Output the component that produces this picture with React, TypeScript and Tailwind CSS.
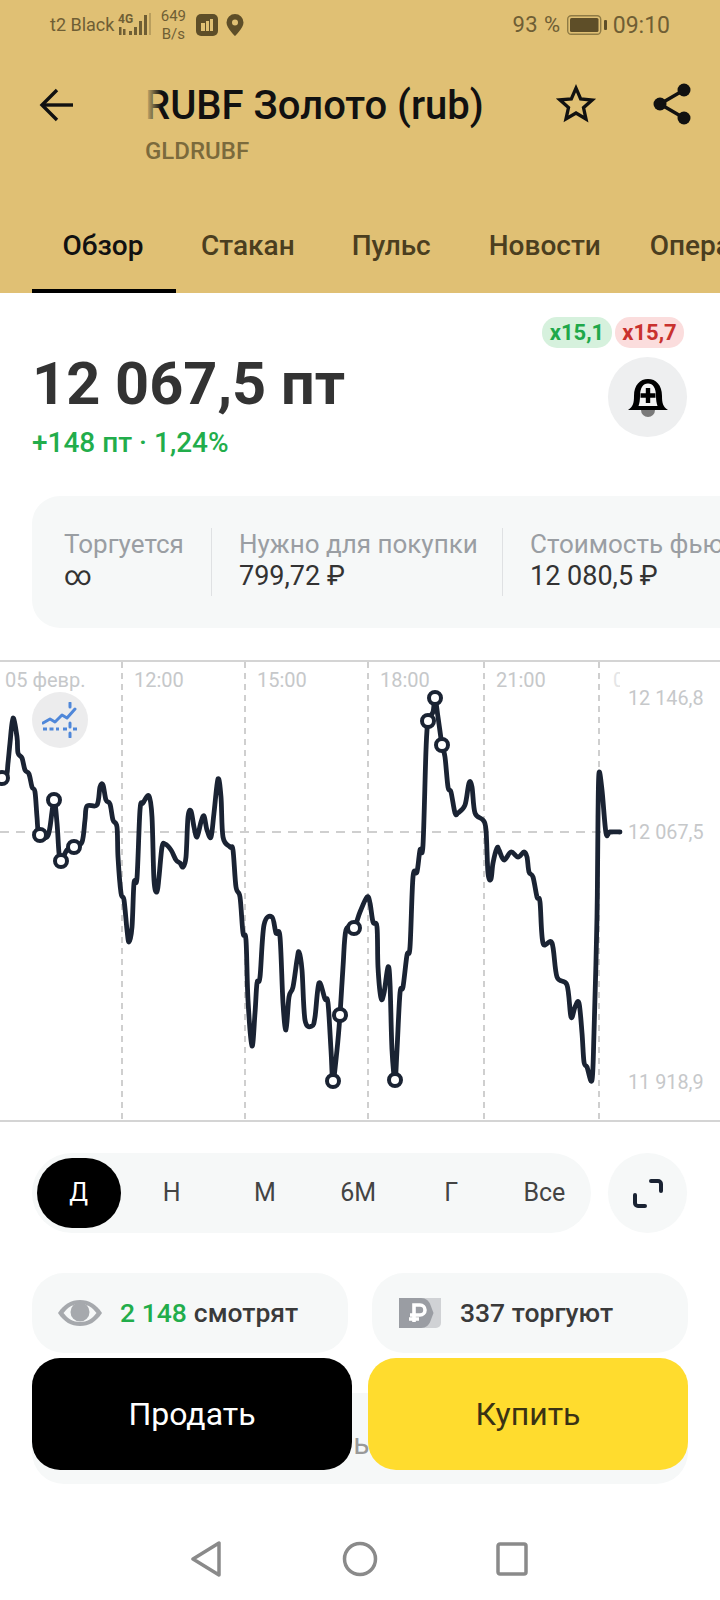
const chartPoints: [number, number][] = [
  [-2, 778], [6, 777], [8, 763], [10, 743], [13, 718], [17, 737], [18, 753], [22, 758], [25, 770], [29, 774],
  [32, 787], [35, 792], [37, 817], [39, 835], [47, 837], [50, 827], [54, 800], [57, 823], [59, 853], [61, 861],
  [67, 850], [74, 847], [82, 842], [85, 820], [87, 806], [97, 805], [100, 787], [103, 785], [106, 800], [110, 804],
  [113, 820], [117, 827], [118, 857], [121, 893], [124, 900], [127, 930], [129, 942], [132, 927], [134, 883], [137, 878],
  [140, 810], [143, 803], [149, 796], [152, 817], [154, 880], [157, 892], [159, 877], [162, 847], [165, 844], [171, 850],
  [176, 860], [180, 863], [183, 867], [186, 857], [188, 817], [191, 811], [194, 827], [197, 837], [201, 822], [204, 816],
  [207, 830], [211, 837], [214, 813], [218, 779], [221, 797], [223, 837], [230, 847], [233, 850], [236, 887], [240, 897],
  [243, 933], [246, 940], [248, 1000], [252, 1046], [255, 1013], [257, 983], [260, 977], [264, 925], [272, 917], [276, 933],
  [280, 937], [283, 1003], [286, 1030], [289, 997], [293, 987], [297, 960], [299, 952], [302, 970], [305, 1020], [312, 1026],
  [315, 1017], [319, 983], [325, 999], [328, 1003], [331, 1050], [333, 1081], [337, 1050], [340, 1015], [343, 967], [346, 930],
  [354, 928], [360, 912], [367, 897], [370, 903], [373, 922], [377, 927], [378, 967], [381, 998], [384, 993], [388, 967],
  [390, 983], [392, 1050], [395, 1080], [397, 1050], [400, 993], [403, 987], [407, 955], [410, 947], [413, 877], [417, 872],
  [420, 850], [423, 845], [426, 750], [428, 721], [433, 712], [435, 698], [438, 717], [442, 745], [445, 757], [448, 787],
  [451, 792], [455, 813], [458, 813], [465, 805], [469, 783], [472, 787], [475, 813], [483, 820], [486, 830], [488, 873],
  [491, 879], [493, 863], [497, 848], [499, 850], [504, 860], [511, 852], [518, 857], [524, 852], [527, 857], [529, 872],
  [533, 877], [537, 897], [540, 902], [543, 943], [552, 943], [557, 977], [567, 985], [571, 1017], [575, 1007], [579, 1003],
  [582, 1033], [584, 1062], [587, 1067], [592, 1080], [594, 1033], [597, 917], [598, 817], [599, 773], [602, 790], [606, 833],
  [610, 832], [620, 832],
];

const markers: [number, number][] = [
  [2, 778], [40, 835], [54, 800], [61, 861], [74, 847], [333, 1081], [340, 1015], [354, 928],
  [395, 1080], [428, 721], [435, 698], [442, 745],
];

// page y of the top of the chart block
const chartTop = 660;

function smoothPath(points: [number, number][]) {
  let d = `M${points[0][0]} ${points[0][1] - chartTop}`;
  for (let i = 0; i < points.length - 1; i++) {
    const p0 = points[Math.max(i - 1, 0)];
    const p1 = points[i];
    const p2 = points[i + 1];
    const p3 = points[Math.min(i + 2, points.length - 1)];
    const c1x = p1[0] + (p2[0] - p0[0]) / 6;
    const c1y = p1[1] + (p2[1] - p0[1]) / 6;
    const c2x = p2[0] - (p3[0] - p1[0]) / 6;
    const c2y = p2[1] - (p3[1] - p1[1]) / 6;
    d += ` C${c1x} ${c1y - chartTop} ${c2x} ${c2y - chartTop} ${p2[0]} ${p2[1] - chartTop}`;
  }
  return d;
}

function StatusBar() {
  return (
    <div className="flex h-[50px] items-center justify-between pl-[50px] pr-[50px] text-[#6f5e34]">
      <div className="flex items-center">
        <span className="text-[18px] leading-none">t2 Black</span>
        <svg width="36" height="28" viewBox="0 0 36 28" className="ml-[3px]" fill="currentColor">
          <text x="1" y="12" fontSize="12" fontWeight="700" fontFamily="Roboto">4G</text>
          <rect x="2" y="16" width="2.500" height="8" />
          <rect x="6" y="18" width="2.500" height="6" />
          <rect x="12" y="20" width="3" height="4" />
          <rect x="17" y="16" width="3" height="8" />
          <rect x="22" y="10" width="3" height="14" />
          <rect x="27" y="4" width="3" height="20" />
          <rect x="32" y="2" width="2" height="22" opacity="0.35" />
        </svg>
        <div className="ml-[7px] flex w-[26px] flex-col items-center text-[15px] leading-[18px]">
          <span>649</span>
          <span>B/s</span>
        </div>
        <svg width="22" height="22" viewBox="0 0 22 22" className="ml-[10px]">
          <rect width="22" height="22" rx="5" fill="#5e4e28" />
          <path d="M5 9h4v8H5zM10 7h3v10h-3zM14 5h3v12h-3z" fill="#e0c074" />
        </svg>
        <svg width="18" height="22" viewBox="0 0 18 22" className="ml-[8px]">
          <path d="M9 0a8.500 8.500 0 0 0-8.500 8.500C.5 14 9 22 9 22s8.500-8 8.500-13.500A8.500 8.500 0 0 0 9 0z" fill="#5e4e28" />
          <circle cx="9" cy="8.500" r="3" fill="#e0c074" />
        </svg>
      </div>
      <div className="flex items-center">
        <span className="text-[22px] leading-none tracking-[0.5px]">93 %</span>
        <svg width="42" height="20" viewBox="0 0 42 20" className="ml-[6px]">
          <rect x="0.700" y="0.700" width="33" height="18.500" rx="3.500" fill="none" stroke="#8f7b45" strokeWidth="1.400" />
          <rect x="3" y="3" width="28.500" height="14" rx="1.500" fill="#5e4e28" />
          <rect x="37" y="5" width="3" height="10" rx="1" fill="#5e4e28" />
        </svg>
        <span className="ml-[4px] text-[23px] leading-none">09:10</span>
      </div>
    </div>
  );
}

function Header() {
  return (
    <div className="flex h-[293px] w-full shrink-0 flex-col bg-[#e0c074]">
      <StatusBar />
      <div className="flex items-start pt-[29px]">
        <svg width="38" height="34" viewBox="0 0 38 34" className="ml-[38px] mt-[9px]" fill="none" stroke="#111" strokeWidth="3.400">
          <path d="M35 17H4" />
          <path d="M19 2 4 17l15 15" />
        </svg>
        <div className="relative ml-[69px] w-[370px]">
          <div className="text-[40px] font-medium leading-[54px] text-[#111]">RUBF Золото (rub)</div>
          <div className="absolute left-0 top-0 h-[54px] w-[16px] bg-gradient-to-r from-[#e0c074] to-transparent" />
          <div className="mt-[5px] text-[24px] font-medium leading-[26px] text-[#7b6a3c]">GLDRUBF</div>
        </div>
        <svg width="42" height="40" viewBox="0 0 24 24" className="ml-[40px] mt-[5px]" fill="none" stroke="#111" strokeWidth="2" strokeLinejoin="miter">
          <path d="m12 2.500 2.800 6.400 6.900.7-5.200 4.600 1.500 6.800L12 17.400 6 20.900l1.500-6.800L2.300 9.500l6.900-.6z" />
        </svg>
        <svg width="38" height="42" viewBox="0 0 38 42" className="ml-[56px] mt-[4px]" fill="#111">
          <circle cx="31" cy="7" r="6.500" />
          <circle cx="7" cy="21" r="6.500" />
          <circle cx="31" cy="35" r="6.500" />
          <path d="M7 21 31 7M7 21l24 14" stroke="#111" strokeWidth="3.500" />
        </svg>
      </div>
      <div className="mt-auto flex h-[66px] items-stretch overflow-hidden whitespace-nowrap pl-[32px] text-[28px] font-medium">
        <div className="flex w-[144px] shrink-0 items-center justify-center border-b-[4px] border-black pb-[24px] pr-[2px] text-[#111]">Обзор</div>
        <div className="ml-[25px] flex shrink-0 items-center pb-[28px] text-[#4b3e1f]">Стакан</div>
        <div className="ml-[57px] flex shrink-0 items-center pb-[28px] text-[#4b3e1f]">Пульс</div>
        <div className="ml-[58px] flex shrink-0 items-center pb-[28px] text-[#4b3e1f]">Новости</div>
        <div className="ml-[49px] flex shrink-0 items-center pb-[28px] text-[#4b3e1f]">Операции</div>
      </div>
    </div>
  );
}

function PriceBlock() {
  return (
    <div className="flex h-[203px] shrink-0 justify-between pl-[32px] pr-[33px]">
      <div className="pt-[57px]">
        <div className="text-[59.5px] font-bold leading-[68px] text-[#333]">12 067,5 пт</div>
        <div className="mt-[9px] text-[28px] font-medium leading-[32px] text-[#22ad4b]">+148 пт · 1,24%</div>
      </div>
      <div className="flex flex-col items-end pt-[24px]">
        <div className="mr-[3px] flex gap-[3px] text-[22px] font-bold leading-none">
          <span className="flex h-[31px] w-[70px] items-center justify-center rounded-[15px] bg-[#d6f1dd] text-[#1fa84a]">x15,1</span>
          <span className="flex h-[31px] w-[69px] items-center justify-center rounded-[15px] bg-[#fbdddd] text-[#c9312e]">x15,7</span>
        </div>
        <div className="mt-[9px] flex h-[80px] w-[79px] items-center justify-center rounded-full bg-[#eeeff0]">
          <svg width="40" height="40" viewBox="0 0 40 40">
            <path d="M13 33a7 7 0 0 0 14 0z" fill="#7a7a7a" />
            <path d="M0 33c5-3 6-7 6-14C6 8 12 2 20 2s14 6 14 17c0 7 1 11 6 14z" fill="#000" />
            <path d="M10.500 29c1-3 1.500-6 1.500-10 0-8 3-12.500 8-12.500S28 11 28 19c0 4 .5 7 1.500 10z" fill="#f4f4f4" />
            <path d="M17.800 11h4.400v5.300h5.300v4.400h-5.300V26h-4.400v-5.300h-5.300v-4.400h5.300z" fill="#000" />
          </svg>
        </div>
      </div>
    </div>
  );
}

function InfoCard() {
  return (
    <div className="ml-[32px] flex h-[132px] shrink-0 items-center overflow-hidden whitespace-nowrap rounded-l-[28px] bg-[#f6f8f8] text-[26px]">
      <div className="flex h-[68px] w-[180px] shrink-0 flex-col border-r border-[#dfe1e3] pl-[32px]">
        <span className="leading-[32px] text-[#9a9ea3]">Торгуется</span>
        <span className="text-[27px] leading-[33px] text-[#333]">∞</span>
      </div>
      <div className="flex h-[68px] w-[291px] shrink-0 flex-col border-r border-[#dfe1e3] pl-[27px]">
        <span className="leading-[32px] text-[#9a9ea3]">Нужно для покупки</span>
        <span className="text-[27px] leading-[33px] text-[#333]">799,72 ₽</span>
      </div>
      <div className="flex h-[68px] shrink-0 flex-col pl-[27px]">
        <span className="leading-[32px] text-[#9a9ea3]">Стоимость фьючерса</span>
        <span className="text-[27px] leading-[33px] text-[#333]">12 080,5 ₽</span>
      </div>
    </div>
  );
}

function Chart() {
  const labels: [string, number][] = [
    ["05 февр.", 5],
    ["12:00", 134],
    ["15:00", 257],
    ["18:00", 380],
    ["21:00", 496],
  ];
  const prices: [string, number][] = [
    ["12 146,8", 698],
    ["12 067,5", 832],
    ["11 918,9", 1082],
  ];
  return (
    <div className="relative mt-[32px] h-[462px] shrink-0 border-y-2 border-[#d4d4d4]">
      <svg width="720" height="458" viewBox="0 0 720 458" fontFamily="Roboto" fontSize="20" className="block">
        {[122, 245, 368, 484, 599].map((x) => (
          <line key={x} x1={x} y1="0" x2={x} y2="458" stroke="#cfcfcf" strokeWidth="2" strokeDasharray="6 5" />
        ))}
        <line x1="0" y1="170" x2="620" y2="170" stroke="#cfcfcf" strokeWidth="2" strokeDasharray="9 7" />
        {labels.map(([t, x]) => (
          <text key={t} x={x} y="25" fill="#c6c8ca">{t}</text>
        ))}
        <svg x="613" y="0" width="7" height="40">
          <text x="0" y="25" fill="#e4e5e6">06</text>
        </svg>
        {prices.map(([t, y]) => (
          <text key={t} x="628" y={y - chartTop + 5} fill="#c6c8ca" fontSize="19.800">{t}</text>
        ))}
        <path d={smoothPath(chartPoints)} transform="translate(0 -2)" fill="none" stroke="#1a2333" strokeWidth="4.800" strokeLinejoin="round" strokeLinecap="round" />
        {markers.map(([x, y]) => (
          <circle key={x} cx={x} cy={y - chartTop - 2} r="6" fill="#fff" stroke="#1a2333" strokeWidth="4" />
        ))}
      </svg>
      <div className="absolute left-[32px] top-[30px] flex h-[56px] w-[56px] items-center justify-center rounded-full bg-[#ececed]">
        <svg width="36" height="36" viewBox="0 0 36 36" fill="none" stroke="#4f87d9" strokeWidth="3">
          <path d="M1 21l7-4 5 3 7-7 5 3 8-9" strokeLinejoin="round" strokeLinecap="round" />
          <path d="M1 27h4M7.500 27h4M14 27h3M21 27h4M31 27h4" />
          <path d="M28 1v4M28 21v4M28 31v4" strokeLinecap="round" />
        </svg>
      </div>
    </div>
  );
}

function RangeRow() {
  const ranges = ["Н", "М", "6М", "Г", "Все"];
  return (
    <div className="mt-[31px] flex h-[80px] shrink-0 justify-between pl-[32px] pr-[33px]">
      <div className="grid w-[559px] grid-cols-6 items-center rounded-[40px] bg-[#f6f8f8] text-[25px] text-[#444]">
        <div className="flex justify-center">
          <div className="flex h-[70px] w-[84px] items-center justify-center rounded-full bg-black text-white">Д</div>
        </div>
        {ranges.map((r) => (
          <div key={r} className="text-center">{r}</div>
        ))}
      </div>
      <div className="flex h-[80px] w-[79px] items-center justify-center rounded-full bg-[#f6f8f8]">
        <svg width="30" height="30" viewBox="0 0 30 30" fill="none" stroke="#1a2333" strokeWidth="4" strokeLinecap="round" strokeLinejoin="round">
          <path d="M18 3h7a3 3 0 0 1 3 3v7" />
          <path d="M2 17v8a3 3 0 0 0 3 3h7" />
        </svg>
      </div>
    </div>
  );
}

function StatsRow() {
  return (
    <div className="mt-[40px] flex h-[80px] shrink-0 justify-between pl-[32px] pr-[32px] text-[26.5px] font-medium text-[#3a3a3a]">
      <div className="flex w-[316px] items-center rounded-[32px] bg-[#f6f8f8] pl-[26px]">
        <svg width="44" height="28" viewBox="0 0 44 28">
          <path d="M0 14C6 5 13 1 22 1s16 4 22 13c-6 9-13 13-22 13S6 23 0 14z" fill="#a6a9ad" />
          <path d="M5.500 14C10 8 15 5 22 5s12 3 16.500 9C34 20 29 23 22 23S10 20 5.500 14z" fill="#f6f8f8" />
          <circle cx="22" cy="13" r="9.500" fill="#a6a9ad" />
        </svg>
        <span className="ml-[18px] text-[#22ad4b]">2 148</span>
        <span className="ml-[7px]">смотрят</span>
      </div>
      <div className="flex w-[316px] items-center rounded-[32px] bg-[#f6f8f8] pl-[27px]">
        <svg width="42" height="30" viewBox="0 0 42 30">
          <path d="M0 0h42v25a5 5 0 0 1-5 5H0z" fill="#d0d2d5" />
          <path d="M0 0h22c5 0 8 3 9.500 7l3 8-3 8c-1.500 4-4.500 7-9.500 7H0z" fill="#9a9da3" />
          <path d="M15 24V7h6a5 5 0 0 1 0 10h-10M10 21h10" fill="none" stroke="#fff" strokeWidth="3.600" />
        </svg>
        <span className="ml-[19px]">337 торгуют</span>
      </div>
    </div>
  );
}

function TradeArea() {
  return (
    <div className="relative mt-[40px] h-[91px] shrink-0 px-[32px]">
      <div className="flex h-[91px] w-[656px] items-center justify-center rounded-[32px] bg-[#f6f8f8] pl-[3px] pt-[9px] text-[30px] text-[#999]">
        ь
      </div>
      <div className="absolute left-[32px] top-[-35px] flex h-[112px] w-[320px] items-center justify-center rounded-[28px] bg-black text-[32px] text-white">
        Продать
      </div>
      <div className="absolute left-[368px] top-[-35px] flex h-[112px] w-[320px] items-center justify-center rounded-[28px] bg-[#ffdc2e] text-[32px] text-[#3a3214]">
        Купить
      </div>
    </div>
  );
}

function NavBar() {
  return (
    <div className="mt-[57px] flex items-center justify-center">
      <svg width="32" height="36" viewBox="0 0 32 36" fill="none" stroke="#8a8a8a" strokeWidth="3.500" strokeLinejoin="round" className="ml-[-2px]">
        <path d="M29 2v32L3 18z" />
      </svg>
      <svg width="36" height="36" viewBox="0 0 36 36" fill="none" stroke="#8a8a8a" strokeWidth="3.500" className="ml-[120px]">
        <circle cx="18" cy="18" r="15.500" />
      </svg>
      <svg width="32" height="34" viewBox="0 0 32 34" fill="none" stroke="#8a8a8a" strokeWidth="3.500" className="ml-[118px]">
        <rect x="2" y="2" width="28" height="30" rx="2" />
      </svg>
    </div>
  );
}

export default function App() {
  return (
    <div className="flex h-[1600px] w-[720px] flex-col overflow-hidden bg-white font-['Roboto',sans-serif]">
      <Header />
      <PriceBlock />
      <InfoCard />
      <Chart />
      <RangeRow />
      <StatsRow />
      <TradeArea />
      <NavBar />
    </div>
  );
}
